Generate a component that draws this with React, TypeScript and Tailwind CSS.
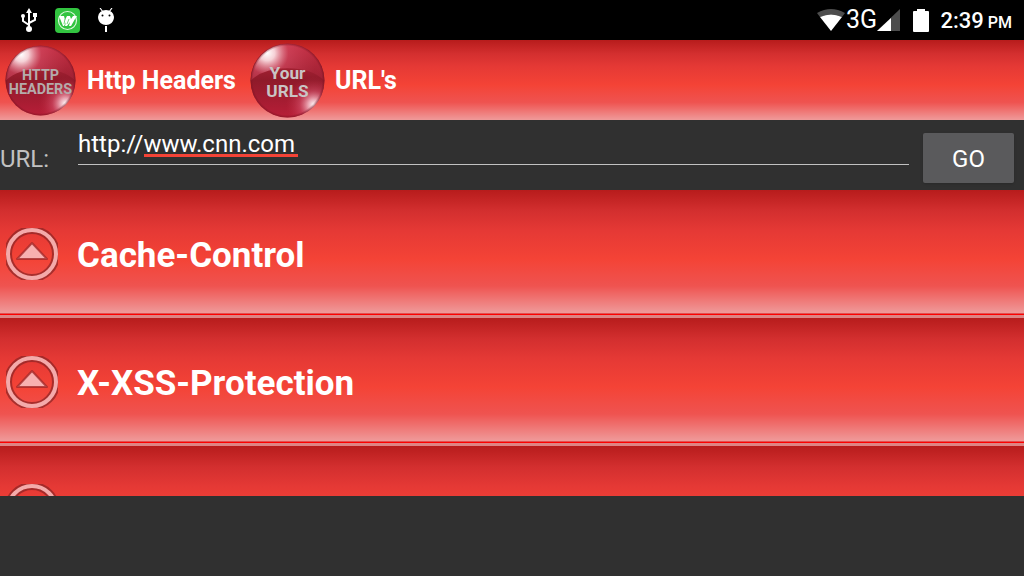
import { useState } from 'react';

const rowGradient =
    'bg-[linear-gradient(to_bottom,#b71c1c_0%,#d32f2f_17%,#e53935_33%,#f44336_56%,#ef5350_78%,#ef9a9a_100%)]';

const headers = ['Cache-Control', 'X-XSS-Protection', ''];

function UsbIcon() {
    return (
        <svg className="h-6 w-[18px]" viewBox="0 0 18 24" fill="none" stroke="#fff" strokeWidth="2">
            <path d="M9 20V4M9 17L3 13V8M9 15l6-3V7" />
            <path d="M9 0l3 5H6z" fill="#fff" stroke="none" />
            <circle cx="9" cy="21" r="3" fill="#fff" stroke="none" />
            <circle cx="3" cy="8" r="2" fill="#fff" stroke="none" />
            <path d="M13 5h4v4h-4z" fill="#fff" stroke="none" />
        </svg>
    );
}

function AppIcon() {
    return (
        <svg className="size-[25px]" viewBox="0 0 25 25">
            <rect width="25" height="25" rx="4" fill="#32c440" />
            <circle cx="12.5" cy="12.5" r="9" fill="none" stroke="#dcf8dc" strokeWidth="1.2" />
            <path
                d="M4 8h5l1 4 2-4h3l1 3 2-3h4l-2 3-4 7h-2l1-4-3 4h-2l1-4-2 4H8z"
                fill="#fff"
            />
            <path d="M10 11l-1 5M14 11l-2 5" stroke="#32c440" strokeWidth="0.7" />
        </svg>
    );
}

function DebugIcon() {
    return (
        <svg className="h-6 w-[18px]" viewBox="0 0 18 24">
            <path d="M3 0l3 4M15 0l-3 4" stroke="#fff" strokeWidth="1.2" />
            <path d="M1 9a8 7 0 0 1 16 0c0 5-4 8-8 8s-8-3-8-8z" fill="#fff" />
            <path d="M8 18h2v6H8z" fill="#fff" />
            <circle cx="5.5" cy="7.5" r="1" />
            <circle cx="12.5" cy="7.5" r="1" />
        </svg>
    );
}

function StatusBar() {
    return (
        <div className="flex h-10 items-center justify-between bg-black pl-5 pr-3 text-white">
            <div className="flex items-center gap-[17px]">
                <UsbIcon />
                <AppIcon />
                <DebugIcon />
            </div>
            <div className="flex items-center">
                <svg className="h-[22px] w-7" viewBox="0 0 28 22">
                    <path d="M0 4q14-8 28 0l-3 4q-11-5-22 0z" fill="#4d4d4d" />
                    <path d="M3 8q11-5 22 0L14 22z" fill="#fff" />
                </svg>
                <span className="w-8 text-center text-[25px]">3G</span>
                <svg className="h-[22px] w-[23px]" viewBox="0 0 23 22">
                    <path d="M23 0v22H0z" fill="#4d4d4d" />
                    <path d="M14 9v13H0z" fill="#fff" />
                </svg>
                <svg className="ml-[13px] h-[23px] w-4" viewBox="0 0 16 23">
                    <path d="M4 0h8v2h3q1 0 1 1v19q0 1-1 1H1q-1 0-1-1V3q0-1 1-1h3z" fill="#fff" />
                </svg>
                <div className="ml-[11px] flex items-baseline gap-1 pt-px font-medium">
                    <span className="text-[22px]">2:39</span>
                    <span className="text-base">PM</span>
                </div>
            </div>
        </div>
    );
}

function Orb({ id, children }: { id: string; children: React.ReactNode }) {
    return (
        <svg className="size-full" viewBox="0 0 74 74">
            <defs>
                <linearGradient id={`${id}-base`} x1="0" y1="0" x2="0" y2="1">
                    <stop offset="0" stopColor="#c42c3e" />
                    <stop offset="0.5" stopColor="#8f1a2a" />
                    <stop offset="1" stopColor="#b81e38" />
                </linearGradient>
                <radialGradient id={`${id}-top`} gradientUnits="userSpaceOnUse" cx="17" cy="10" r="50">
                    <stop offset="0" stopColor="#fff" />
                    <stop offset="0.15" stopColor="#fde4e8" stopOpacity="0.9" />
                    <stop offset="0.42" stopColor="#d9506a" stopOpacity="0.55" />
                    <stop offset="1" stopColor="#c03048" stopOpacity="0.3" />
                </radialGradient>
                <radialGradient id={`${id}-low`} gradientUnits="userSpaceOnUse" cx="63" cy="61" r="28">
                    <stop offset="0" stopColor="#fff" />
                    <stop offset="0.2" stopColor="#fbc8d2" stopOpacity="0.8" />
                    <stop offset="0.5" stopColor="#e0607a" stopOpacity="0.45" />
                    <stop offset="1" stopColor="#c0283c" stopOpacity="0" />
                </radialGradient>
                <radialGradient id={`${id}-rim`} cx="50%" cy="50%" r="50%">
                    <stop offset="0.93" stopColor="#7a1220" stopOpacity="0" />
                    <stop offset="1" stopColor="#7a1220" stopOpacity="0.6" />
                </radialGradient>
            </defs>
            <circle cx="37" cy="37" r="36.5" fill={`url(#${id}-base)`} />
            <path d="M1 37a36 36 0 0 1 72 0q-12-12-36-12T1 37z" fill={`url(#${id}-top)`} />
            <circle cx="37" cy="37" r="36.5" fill={`url(#${id}-low)`} />
            <circle cx="37" cy="37" r="36.5" fill={`url(#${id}-rim)`} />
            {children}
        </svg>
    );
}

function Toolbar() {
    return (
        <nav className={`flex h-20 items-center text-[25px] font-bold text-white ${rowGradient}`}>
            <button className="flex items-center gap-[11px] pl-[5px]">
                <span className="size-[71px]">
                    <Orb id="headers">
                        <g className="text-[15px] font-bold" fill="#b5abab" textAnchor="middle">
                            <text x="37" y="36">
                                HTTP
                            </text>
                            <text x="37" y="51">
                                HEADERS
                            </text>
                        </g>
                    </Orb>
                </span>
                <span className="pt-[2px]">Http Headers</span>
            </button>
            <button className="flex items-center gap-[10px] pl-[14px]">
                <span className="size-[75px]">
                    <Orb id="urls">
                        <g className="text-[17px] font-bold" fill="#c9c4c4" textAnchor="middle">
                            <text x="37" y="36">
                                Your
                            </text>
                            <text x="37" y="53">
                                URLS
                            </text>
                        </g>
                    </Orb>
                </span>
                <span className="pt-[2px]">URL's</span>
            </button>
        </nav>
    );
}

function CollapseIcon() {
    return (
        <svg className="size-[52px] shrink-0" viewBox="0 0 52 52" fill="none">
            <circle cx="26" cy="26" r="24" stroke="#8f2626" strokeOpacity="0.75" strokeWidth="8" />
            <circle cx="26" cy="26" r="24" stroke="#f4aaaa" strokeWidth="4" />
            <path
                d="M26 15L41 31H11z"
                fill="#f8b0b0"
                stroke="#a52a2a"
                strokeOpacity="0.8"
                strokeWidth="2"
                strokeLinejoin="round"
            />
        </svg>
    );
}

function HeaderRow({ name }: { name: string }) {
    return (
        <li>
            <button
                className={`flex h-[123px] w-full items-center gap-[19px] pl-[6px] pt-[5px] text-left text-[35px] font-bold text-white ${rowGradient}`}
            >
                <CollapseIcon />
                <span className="pt-1">{name}</span>
            </button>
            <div className="h-[5px] border-b-[3px] border-t border-b-[#dd8484] border-t-[#e05050] bg-[#ff0000]" />
        </li>
    );
}

function App() {
    const [url, setUrl] = useState('http://www.cnn.com');

    return (
        <div className="min-h-screen bg-[#303030] font-[Roboto,sans-serif]">
            <StatusBar />
            <Toolbar />
            <form className="flex h-[70px] items-center pr-[10px]" onSubmit={(e) => e.preventDefault()}>
                <label htmlFor="url" className="w-[78px] pt-2 text-2xl text-[#c1c1c1]">
                    URL:
                </label>
                <div className="relative mr-[14px] flex-1 self-start pt-2">
                    <input
                        id="url"
                        type="text"
                        spellCheck={false}
                        value={url}
                        onChange={(e) => setUrl(e.target.value)}
                        className="block h-[37px] w-full border-b border-[#c1c1c1] pb-[5px] text-2xl text-white outline-none"
                    />
                    {url === 'http://www.cnn.com' && (
                        <span className="absolute left-[66px] top-[34px] h-[3px] w-[154px] bg-[#f44336]" />
                    )}
                </div>
                <button className="mt-[6px] h-[50px] w-[91px] rounded-xs bg-[#5a5a5c] pt-[2px] text-2xl text-white shadow-sm">
                    GO
                </button>
            </form>
            <ul className="h-[306px] overflow-hidden">
                {headers.map((name, i) => (
                    <HeaderRow key={i} name={name} />
                ))}
            </ul>
        </div>
    );
}

export default App;
